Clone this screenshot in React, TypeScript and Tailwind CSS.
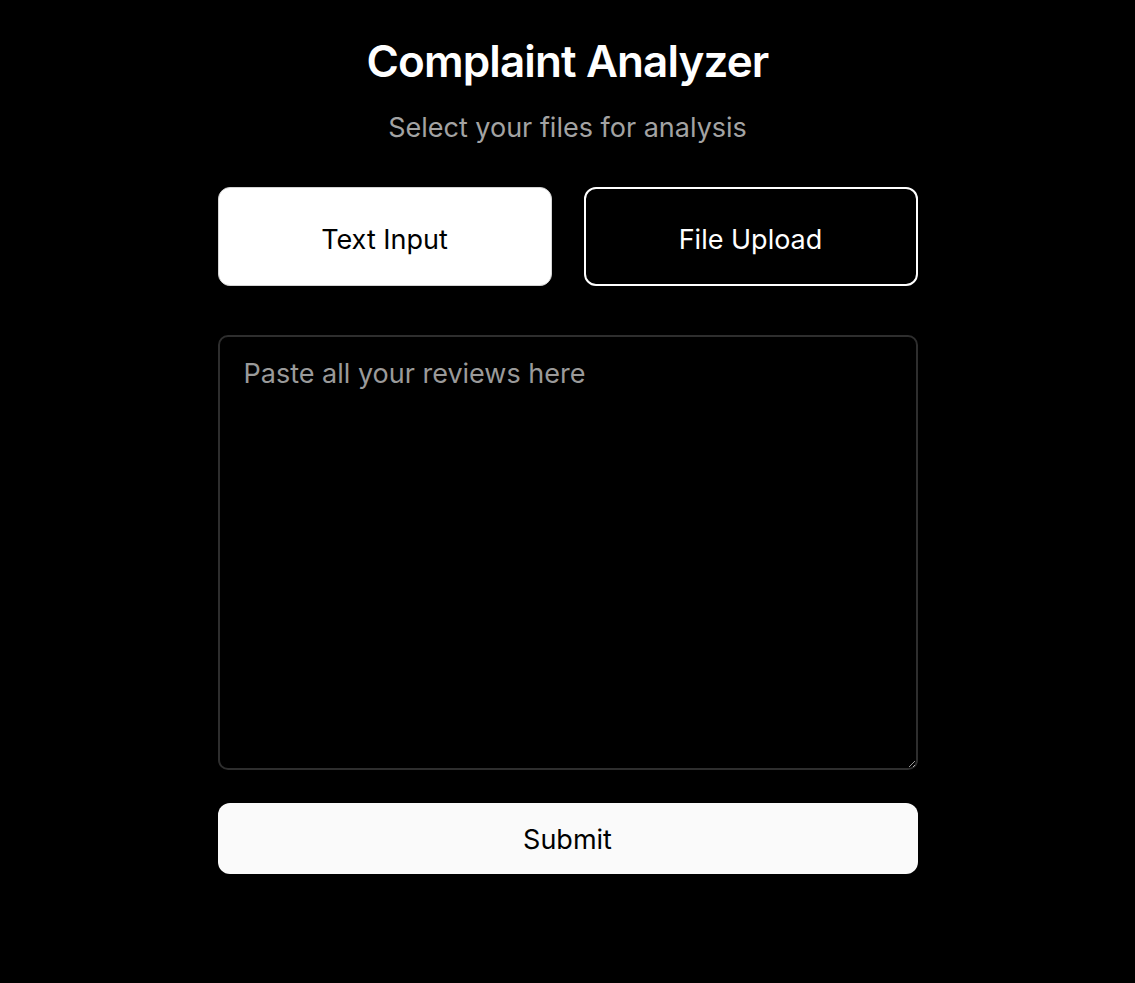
import React, { useState } from 'react';

export default function App() {
  const [mode, setMode] = useState<'text' | 'file'>('text');
  const [reviews, setReviews] = useState('');

  return (
    <div className="min-h-screen w-full bg-black font-['Inter',sans-serif] text-white">
      <div className="mx-auto flex w-[700px] flex-col items-stretch pt-[35px]">
        <h1 className="text-center text-[44px] font-semibold leading-[52px] tracking-[-0.02em]">
          Complaint Analyzer
        </h1>
        <p className="mt-[25px] text-center text-[27px] leading-8 text-[#a3a3a3]">
          Select your files for analysis
        </p>

        <div className="mt-[43px] grid grid-cols-2 gap-8">
          <button
            onClick={() => setMode('text')}
            className={`h-[99px] rounded-xl pt-2 text-[27px] ${
              mode === 'text'
                ? 'border border-[#d4d4d4] bg-white text-black'
                : 'border-2 border-white bg-black text-white'
            }`}
          >
            Text Input
          </button>
          <button
            onClick={() => setMode('file')}
            className={`h-[99px] rounded-xl pt-2 text-[27px] ${
              mode === 'file'
                ? 'border border-[#d4d4d4] bg-white text-black'
                : 'border-2 border-white bg-black text-white'
            }`}
          >
            File Upload
          </button>
        </div>

        <textarea
          value={reviews}
          onChange={(e) => setReviews(e.target.value)}
          placeholder="Paste all your reviews here"
          className="mt-[49px] h-[435px] w-full rounded-[10px] border-2 border-[#2e2e2e] bg-black px-6 pt-[21px] text-[27px] leading-8 text-white placeholder:text-[#9a9a9a] focus:outline-none"
        />

        <button className="mt-[33px] h-[71px] rounded-xl bg-[#fafafa] pt-1 text-[27px] text-black">
          Submit
        </button>
      </div>
    </div>
  );
}
